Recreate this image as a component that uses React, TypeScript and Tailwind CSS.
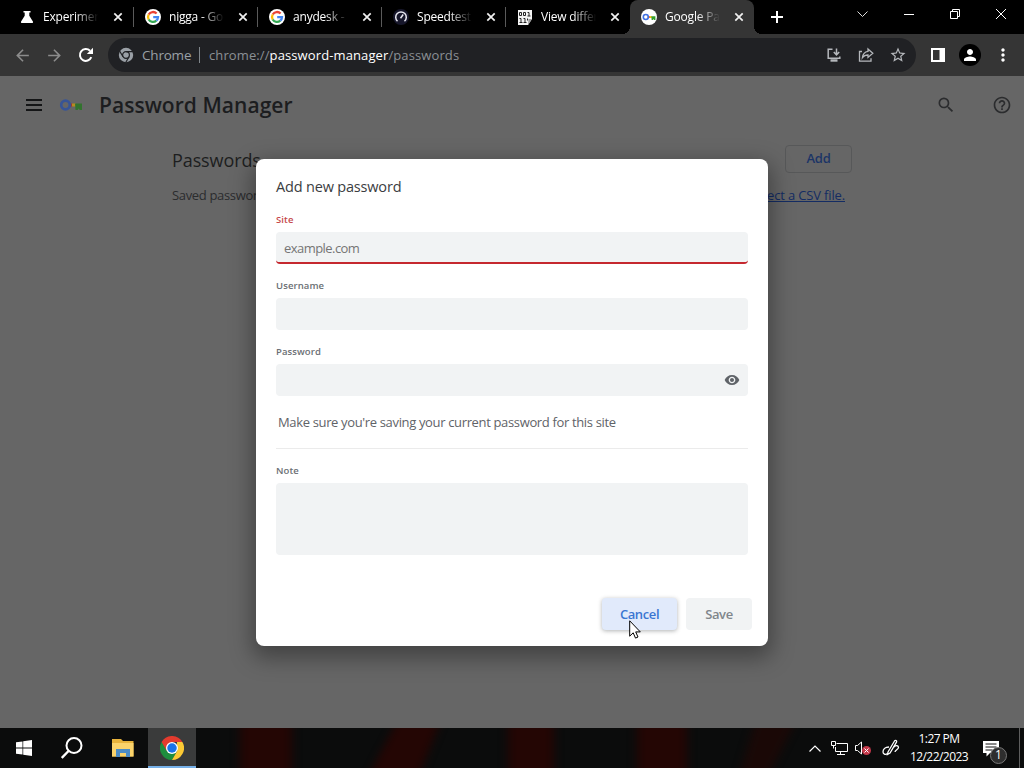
import clsx from 'clsx';
import type { ReactNode } from 'react';
import {
    MdArrowBack,
    MdArrowForward,
    MdHelpOutline,
    MdMoreVert,
    MdPerson,
    MdSearch,
    MdStarBorder,
    MdVisibility,
} from 'react-icons/md';

interface TabProps {
    title: string;
    icon: ReactNode;
    active?: boolean;
    divider?: boolean;
    className?: string;
}

function GoogleIcon() {
    return (
        <svg viewBox="0 0 16 16" className="h-4 w-4">
            <circle cx="8" cy="8" r="8" fill="#fff" />
            <g fill="none" strokeWidth="2.3">
                <path d="M11.6 4.5A5 5 0 0 0 3.7 5.5" stroke="#ea4335" />
                <path d="M3.7 5.5a5 5 0 0 0 0 5" stroke="#fbbc05" />
                <path d="M3.7 10.5a5 5 0 0 0 7.6 1.2" stroke="#34a853" />
                <path d="M11.3 11.7A5 5 0 0 0 13 8.2H8.2" stroke="#4285f4" />
            </g>
        </svg>
    );
}

function FlaskIcon() {
    return (
        <svg viewBox="0 0 16 16" className="h-4 w-4" fill="#fff">
            <path d="M4.5 2h7v1.6h-1.2v3.2l3.6 5.6c.5.8 0 1.6-.9 1.6H3c-.9 0-1.4-.8-.9-1.6l3.6-5.6V3.6H4.5z" />
        </svg>
    );
}

function SpeedtestIcon() {
    return (
        <svg viewBox="0 0 16 16" className="h-4 w-4">
            <circle cx="8" cy="8" r="8" fill="#17172b" />
            <path d="M4.5 12.2a5.300 5.300 0 1 1 7 0" fill="none" stroke="#e8e8f0" strokeWidth="1.5" />
            <path d="M7.5 9.300l2.700-3.800" stroke="#e8e8f0" strokeWidth="1.5" />
        </svg>
    );
}

function BinaryIcon() {
    return (
        <svg viewBox="0 0 16 16" className="h-4 w-4">
            <path d="M1 1h14v9l-4 6H1z" fill="#f4f4f4" />
            <g fill="none" stroke="#222" strokeWidth="1">
                <path d="M2.5 3.5h2v3h-2zM6.5 3.5h2v3h-2zM10.500 3.500H12v3.500M10.500 7h3" />
                <path d="M2.5 9.500H4V13M2.500 13.500h3M6.500 9.500H8V13M6.500 13.500h3M10.500 9.500v2" />
            </g>
            <path d="M15 10h-3.500l-.5 6z" fill="#999" />
        </svg>
    );
}

function KeyIcon({ className }: { className?: string }) {
    return (
        <svg viewBox="0 0 24 14" className={className}>
            <path d="M10 5.5h4v3h-4z" fill="#ea4335" />
            <path d="M13 5.5h4v3h-4z" fill="#fbbc05" />
            <path d="M16 5.5h7V12h-2.300l-1-1.500-1 1.500h-2.200z" fill="#34a02c" />
            <circle cx="6.5" cy="7" r="4.300" fill="none" stroke="#4070e0" strokeWidth="2.700" />
        </svg>
    );
}

function ChromeLogo() {
    return (
        <svg viewBox="0 0 48 48" className="h-6 w-6">
            <path d="M24 24L24 48A24 24 0 0 1 3.200 12z" fill="#1e8e3e" />
            <path d="M34.400 30L24 48l-6-16 6-8z" fill="#1e8e3e" />
            <path d="M34.400 30L24 48a24 24 0 0 0 20.800-36H34z" fill="#fcc934" />
            <path d="M24 12H44.800A24 24 0 0 0 3.200 12l10.400 18L20 20z" fill="#e33b2e" />
            <circle cx="24" cy="24" r="12" fill="#fff" />
            <circle cx="24" cy="24" r="9.500" fill="#1a73e8" />
        </svg>
    );
}

function ChromeMono() {
    return (
        <svg viewBox="0 0 16 16" className="h-4 w-4">
            <circle cx="8" cy="8" r="7.200" fill="#9aa0a6" />
            <g stroke="#202124" strokeWidth="1.200" fill="none">
                <path d="M8 4.600h7M5 9.700L1.600 4M11 9.700l-3.400 6" />
                <circle cx="8" cy="8" r="3.400" />
            </g>
        </svg>
    );
}

function CloseIcon() {
    return (
        <svg viewBox="0 0 10 10" className="h-[10px] w-[10px] shrink-0" stroke="#f1f1f1" strokeWidth="1.700">
            <path d="M1.300 1.300l7.400 7.400M8.700 1.300L1.300 8.700" />
        </svg>
    );
}

function Tab({ title, icon, active, divider, className }: TabProps) {
    return (
        <div
            className={clsx(
                'relative flex h-[34px] w-[124px] shrink-0 items-center pr-[10px] pl-[11px]',
                active && 'rounded-t-[8px] bg-[#353535]',
                className,
            )}
        >
            {icon}
            <div className="ml-2 w-[58px] overflow-hidden mask-r-from-55% mask-r-to-95% text-[12px] tracking-[-0.2px] whitespace-nowrap text-white">
                {title}
            </div>
            <div className="ml-auto">
                <CloseIcon />
            </div>
            {divider && <div className="absolute top-[7px] right-0 h-5 w-px bg-[#5a5a5a]" />}
            {active && (
                <>
                    <div className="absolute bottom-0 -left-2 h-2 w-2 bg-[radial-gradient(circle_at_0_0,transparent_8px,#353535_8px)]" />
                    <div className="absolute -right-2 bottom-0 h-2 w-2 bg-[radial-gradient(circle_at_100%_0,transparent_8px,#353535_8px)]" />
                </>
            )}
        </div>
    );
}

function TabStrip() {
    return (
        <div className="flex h-[34px] bg-black pl-[8px]">
            <Tab title="Experiments" icon={<FlaskIcon />} divider className="w-[126px] pr-[11px]" />
            <Tab title="nigga - Goo" icon={<GoogleIcon />} divider />
            <Tab title="anydesk - Goo" icon={<GoogleIcon />} divider />
            <Tab title="Speedtest" icon={<SpeedtestIcon />} divider />
            <Tab title="View differen" icon={<BinaryIcon />} />
            <Tab
                title="Google Pass"
                active
                icon={
                    <div className="flex h-4 w-4 shrink-0 items-center justify-center rounded-full bg-white">
                        <KeyIcon className="w-[14px]" />
                    </div>
                }
            />
            <svg viewBox="0 0 12 12" className="mt-[11px] ml-[17px] h-3 w-3" stroke="#fff" strokeWidth="2">
                <path d="M6 0v12M0 6h12" />
            </svg>
            <div className="ml-auto flex h-[28px] items-center pr-[18px]">
                <svg viewBox="0 0 11 6" className="h-[6px] w-[11px]" fill="none" stroke="#ddd">
                    <path d="M.5.5l5 5 5-5" />
                </svg>
                <svg viewBox="0 0 10 10" className="ml-[36px] h-[10px] w-[10px]" stroke="#fff">
                    <path d="M0 5.500h10" />
                </svg>
                <svg viewBox="0 0 10 10" className="ml-[36px] h-[10px] w-[10px]" fill="none" stroke="#fff">
                    <path d="M.5 2.500h7v7h-7zM2.500 2V.5h7v7H8" />
                </svg>
                <svg viewBox="0 0 10 10" className="ml-[36px] h-[10px] w-[10px]" stroke="#fff">
                    <path d="M0 0l10 10M10 0L0 10" />
                </svg>
            </div>
        </div>
    );
}

function Toolbar() {
    return (
        <div className="flex h-[42px] items-center bg-[#353535] pl-[13px]">
            <MdArrowBack className="h-[19px] w-[19px] shrink-0 text-[#8c8c8c]" />
            <MdArrowForward className="ml-[13px] h-[19px] w-[19px] shrink-0 text-[#8c8c8c]" />
            <svg viewBox="0 0 16 16" className="ml-[14px] h-4 w-4 shrink-0">
                <path d="M13.300 10.200A5.900 5.900 0 1 1 12 3.800" fill="none" stroke="#fff" strokeWidth="2" />
                <path d="M15 .800V7H8.800z" fill="#fff" />
            </svg>
            <div className="ml-[14px] flex h-[34px] w-[808px] shrink-0 items-center rounded-full bg-[#202124] pr-[9px] pl-[10px] text-[#9aa0a6]">
                <ChromeMono />
                <span className="ml-[8px] w-[49px] pt-px text-[13.500px] tracking-[-0.200px]">Chrome</span>
                <div className="ml-[8px] h-4 w-px bg-[#80868b]" />
                <span className="ml-[9px] pt-px text-[13px] tracking-[0.110px] whitespace-nowrap text-[#8b9095]">
                    chrome://<span className="text-white">password-manager</span>/passwords
                </span>
                <div className="ml-auto flex items-center gap-4 text-[#b5b8bc]">
                    <svg viewBox="0 0 16 16" className="h-4 w-4" fill="none" stroke="currentColor" strokeWidth="1.5">
                        <path d="M6.500 2.200H2.200v9h11.600V9.500M10.500 1.500v6M7.800 5l2.700 2.800L13.200 5" />
                        <path d="M4.500 13.500h7" strokeWidth="2.400" />
                    </svg>
                    <svg viewBox="0 0 16 16" className="h-4 w-4" fill="none" stroke="currentColor" strokeWidth="1.300">
                        <path d="M4 4.500H1.500v9.700H13v-3" />
                        <path d="M10 2l4.800 4.200L10 10.400V8C7.500 8 5.800 8.800 4.400 10.700 4.800 7.200 6.700 4.900 10 4.400z" />
                    </svg>
                    <MdStarBorder className="-ml-px h-[18px] w-[18px]" />
                </div>
            </div>
            <svg viewBox="0 0 14 14" className="ml-[15px] h-[14px] w-[14px] shrink-0">
                <path d="M1 1h12v12H1z" fill="none" stroke="#fff" strokeWidth="2" />
                <path d="M8.500 1H13v12H8.500z" fill="#fff" />
            </svg>
            <div className="ml-[14px] flex h-[22px] w-[22px] shrink-0 items-center justify-center rounded-full bg-black">
                <MdPerson className="h-[18px] w-[18px] text-white" />
            </div>
            <MdMoreVert className="ml-[12px] h-[20px] w-[20px] shrink-0 text-white" />
        </div>
    );
}

function Field({ label, error, children, className }: { label: string; error?: boolean; children?: ReactNode; className?: string }) {
    return (
        <div>
            <div
                className={clsx(
                    'h-4 pt-px text-[9.500px] leading-4 font-semibold tracking-[0.100px]',
                    error ? 'text-[#c5484a]' : 'text-[#6b6f74]',
                )}
            >
                {label}
            </div>
            <div
                className={clsx(
                    'mt-[5px] flex items-center rounded-[4px] bg-[#f1f3f4] px-2 text-[13px] tracking-[-0.550px] text-[#757575]',
                    error && 'border-b-2 border-[#c5282f] pt-[3px]',
                    className,
                )}
            >
                {children}
            </div>
        </div>
    );
}

function AddPasswordDialog() {
    return (
        <div className="absolute top-[83px] left-[256px] flex h-[487px] w-[512px] flex-col rounded-[8px] bg-white px-5 pt-[17px] shadow-[0_8px_22px_4px_rgba(0,0,0,0.35)]">
            <h2 className="h-[22px] text-[14.500px] leading-[22px] tracking-[-0.180px] text-[#3a3d41]">Add new password</h2>
            <div className="mt-[13px] flex flex-col gap-[13px]">
                <Field label="Site" error className="h-8">
                    example.com
                </Field>
                <Field label="Username" className="h-8" />
                <Field label="Password" className="h-8">
                    <MdVisibility className="ml-auto h-4 w-4 text-[#5f6368]" />
                </Field>
            </div>
            <p className="mt-[16px] pl-[2px] text-[13px] leading-5 tracking-[-0.350px] whitespace-nowrap text-[#5f6368]">
                Make sure you're saving your current password for this site
            </p>
            <div className="mt-[16px] mb-[13px] h-px shrink-0 bg-[#ebebeb]" />
            <Field label="Note" className="h-[72px]" />
            <div className="mt-[43px] -mr-1 flex justify-end gap-[9px] text-[13px] font-semibold tracking-[-0.400px]">
                <button className="h-8 w-[75px] rounded-[4px] bg-[#e1eafb] pt-[2px] text-[#3a76d2] shadow-[0_1px_4px_rgba(60,64,67,0.4)]">
                    Cancel
                </button>
                <button className="h-8 w-[66px] rounded-[4px] bg-[#f1f3f4] pt-[2px] text-[#80868b]">Save</button>
            </div>
        </div>
    );
}

function PasswordPage() {
    return (
        <main className="relative h-[652px] bg-[#666666] text-[#1b1c1e]">
            <div className="flex h-[58px] items-center pr-[12px] pl-[26px]">
                <svg viewBox="0 0 16 12" className="h-3 w-4" stroke="#141516" strokeWidth="2">
                    <path d="M0 1h16M0 6h16M0 11h16" />
                </svg>
                <KeyIcon className="ml-[17px] h-[14px] w-6 brightness-75 saturate-[0.8]" />
                <h1 className="ml-4 pt-[2px] text-[21px] font-semibold tracking-[0.040px] whitespace-nowrap text-[#1c1d1f]">
                    Password Manager
                </h1>
                <MdSearch className="ml-auto h-[20px] w-[20px] text-[#2b2c2e]" />
                <MdHelpOutline className="ml-[36px] h-5 w-5 text-[#2b2c2e]" />
            </div>
            <div className="mr-[172px] ml-[172px] flex h-[28px] items-center justify-between">
                <h2 className="mt-[25px] text-[18px] tracking-[-0.100px] text-[#1d1e20]">Passwords</h2>
                <button className="mt-[22px] h-7 w-[67px] rounded-[4px] border border-[#575859] text-[13px] font-semibold tracking-[-0.200px] text-[#1c3566]">
                    Add
                </button>
            </div>
            <div className="mr-[179px] ml-[172px] flex justify-between pt-[23px] text-[13px] leading-5 tracking-[-0.340px] text-[#2b2c2e]">
                <span>Saved passwords</span>
                <span className="tracking-[-0.150px] text-[#142c63] underline">select a CSV file.</span>
            </div>
            <AddPasswordDialog />
            <svg viewBox="0 0 12 19" className="absolute top-[544px] left-[629px] h-[19px] w-3">
                <path
                    d="M.7.8v15.400l3.500-3.400 2.300 5.300 2.500-1.100-2.300-5.100h4.600z"
                    fill="#fff"
                    stroke="#000"
                    strokeWidth="1"
                />
            </svg>
        </main>
    );
}

function Tray() {
    return (
        <div className="ml-auto flex h-10 items-center text-white">
            <svg viewBox="0 0 12 7" className="h-[7px] w-3" fill="none" stroke="#fff" strokeWidth="1.200">
                <path d="M.5 6.500L6 1l5.500 5.500" />
            </svg>
            <svg viewBox="0 0 17 14" className="ml-[10px] h-[14px] w-[17px]" fill="none" stroke="#fff">
                <path d="M5.500 2.500h11v8h-12V6M9.500 10.500v3M6 13.500h8" />
                <path d="M.5.500h4v4h-4zM2.500 4.500v3" />
            </svg>
            <svg viewBox="0 0 16 16" className="ml-[7px] h-4 w-4">
                <path d="M.5 5.500h2L6.500 2v12L2.500 10.500h-2z" fill="none" stroke="#fff" />
                <circle cx="11.500" cy="10.500" r="4.500" fill="#c4384a" />
                <path d="M9.500 8.500l4 4M13.500 8.500l-4 4" stroke="#fff" />
            </svg>
            <svg viewBox="0 0 18 18" className="ml-[11px] h-[18px] w-[18px]" fill="none" stroke="#fff" strokeWidth="1.300">
                <path d="M6 13l6.500-11c1-1.300 2.700-.3 2 1.200L8 14l-2.500 1.500z" />
                <path d="M7 8C3 8 1 10.500 1 13s3 3 4.500 1.500M12 8c2-2 4.500-1.500 4.500.5S13 11 13 13" />
            </svg>
            <div className="ml-[7px] w-[64px] text-center text-[12px] leading-[18px] tracking-[-0.550px]">
                <div>1:27 PM</div>
                <div>12/22/2023</div>
            </div>
            <div className="relative ml-[12px] h-[17px] w-4">
                <svg viewBox="0 0 16 17" className="h-[17px] w-4">
                    <path d="M0 1h16v12H7l-3.500 3.500V13H0z" fill="#fff" />
                    <path d="M2.500 4h11M2.500 7h11M2.500 10h7" stroke="#111" />
                </svg>
                <div className="absolute top-[7px] left-[7px] flex h-[17px] w-[17px] items-center justify-center rounded-full border border-[#777] bg-[#2e2e2e] text-[12px]">
                    1
                </div>
            </div>
            <div className="mr-[4px] ml-[20px] h-10 w-px bg-[#5e5e5e]" />
        </div>
    );
}

function Taskbar() {
    return (
        <footer className="relative flex h-10 bg-[#0b0c0c]">
            <svg viewBox="0 0 1024 40" className="absolute inset-0 h-10 w-full">
                <defs>
                    <filter id="soft" colorInterpolationFilters="sRGB">
                        <feGaussianBlur stdDeviation="5 1" />
                    </filter>
                </defs>
                <g fill="#240604" filter="url(#soft)">
                    <path d="M240-5h52v50h-52zM396-5h44L420 45h-50zM508-5h46v50h-46zM637-5h50v50h-50z" />
                    <path d="M755-5h40l-25 50h-30z" opacity="0.6" />
                </g>
            </svg>
            <div className="relative flex w-full">
                <div className="flex w-[48px] items-center justify-center">
                    <svg viewBox="0 0 16 16" className="h-4 w-4" fill="#fff">
                        <path d="M0 2.300l6.500-.9v6.200H0zM7.200 1.300L16 0v7.600H7.200zM0 8.400h6.500v6.200L0 13.700zM7.200 8.400H16V16l-8.800-1.300z" />
                    </svg>
                </div>
                <div className="flex w-[48px] items-center justify-center">
                    <svg viewBox="0 0 22 22" className="h-[22px] w-[22px]" fill="none" stroke="#fff" strokeWidth="2">
                        <circle cx="13" cy="8.500" r="7.500" />
                        <path d="M7.500 14L.8 21" strokeWidth="2.400" />
                    </svg>
                </div>
                <div className="flex w-[52px] items-center justify-center pl-[2px]">
                    <svg viewBox="0 0 22 18" className="h-[18px] w-[22px]">
                        <path d="M0 0h9l2 2h10.500v15.500H0z" fill="#e8b33c" />
                        <path d="M0 4h21.500v13.500H0z" fill="#fbd36b" />
                        <path d="M4 10h14v8h-4v-4H8v4H4z" fill="#4d8cc4" />
                    </svg>
                </div>
                <div className="flex w-12 items-center justify-center border-b-2 border-[#76b0e8] bg-[#3a3b3b] pt-px">
                    <ChromeLogo />
                </div>
                <Tray />
            </div>
        </footer>
    );
}

export default function App() {
    return (
        <div className="h-[768px] w-[1024px] overflow-hidden font-['Open_Sans','Noto_Sans',sans-serif]">
            <TabStrip />
            <Toolbar />
            <PasswordPage />
            <Taskbar />
        </div>
    );
}
